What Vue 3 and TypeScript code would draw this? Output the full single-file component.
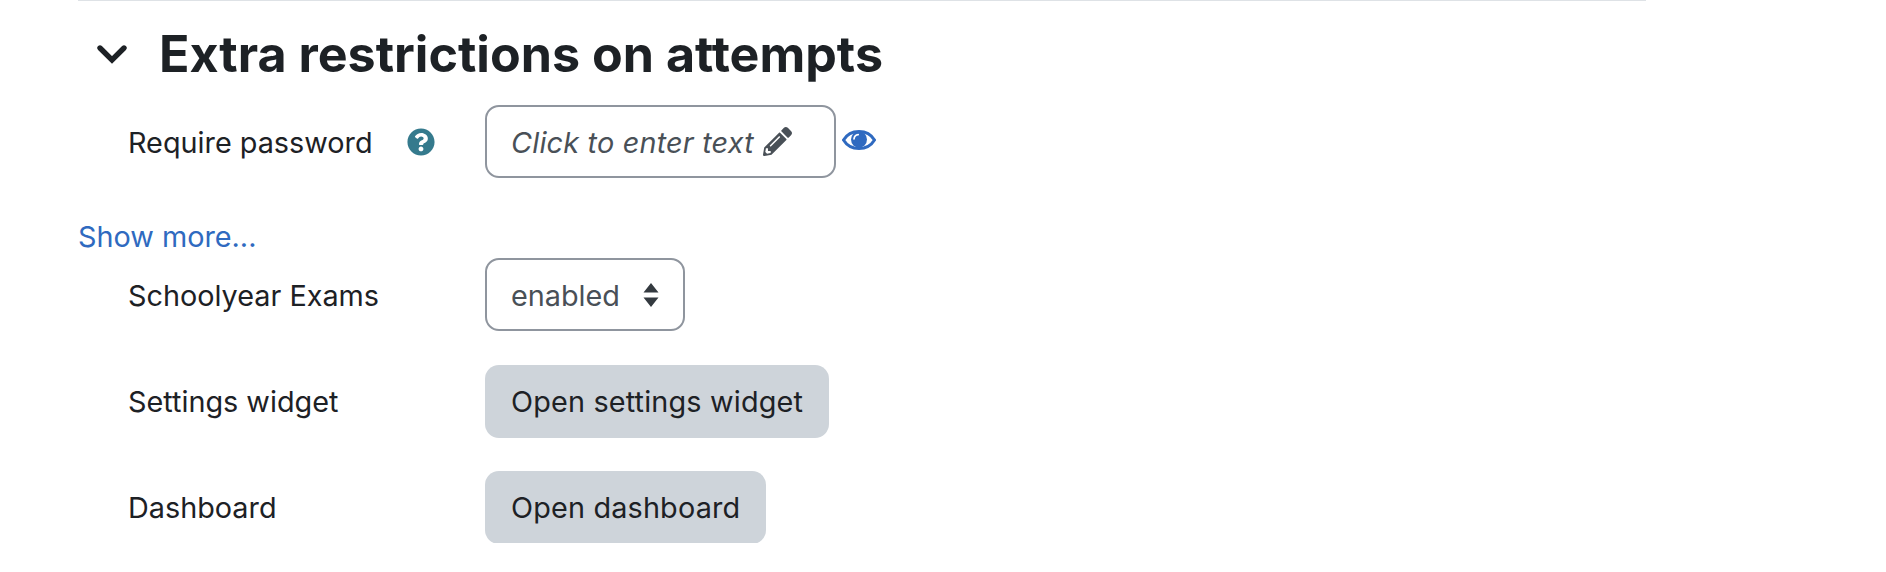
<template>
  <div class="page">
    <div class="section">
      <div class="section-head">
        <svg class="chevron" viewBox="0 0 32 22" aria-hidden="true">
          <path d="M4 5l12 12L28 5" fill="none" stroke="currentColor" stroke-width="5.4" stroke-linecap="round" stroke-linejoin="miter" />
        </svg>
        <h3 class="section-title">Extra restrictions on attempts</h3>
      </div>

      <div class="row row-password">
        <div class="label">
          <span>Require password</span>
          <svg class="help" viewBox="0 0 512 512" aria-hidden="true">
            <path
              fill="currentColor"
              d="M504 256c0 137-111 248-248 248S8 393 8 256 119 8 256 8s248 111 248 248zM263 90c-54 0-89 23-116 63-4 5-3 12 3 16l35 26c5 4 13 3 17-2 18-23 30-36 57-36 20 0 45 13 45 33 0 15-12 22-32 33-23 13-54 30-54 71v4c0 7 5 12 12 12h56c7 0 12-5 12-12v-2c0-28 83-29 83-106 0-58-60-100-118-100zm-7 248c-24 0-44 20-44 44s20 44 44 44 44-20 44-44-20-44-44-44z"
            />
          </svg>
        </div>
        <div class="control">
          <div class="inplace">
            <em>Click to enter text</em>
            <svg class="pencil" viewBox="0 0 512 512" aria-hidden="true">
              <path
                fill="currentColor"
                d="M497.9 142.1l-46.1 46.1c-4.700 4.700-12.300 4.700-17 0l-111-111c-4.700-4.700-4.700-12.300 0-17l46.100-46.100c18.700-18.700 49.100-18.700 67.900 0l60.100 60.100c18.800 18.700 18.800 49.100 0 67.900zM284.200 99.800L21.600 362.400.4 483.900c-2.900 16.400 11.400 30.600 27.800 27.800l121.500-21.300 262.600-262.600c4.700-4.700 4.700-12.300 0-17l-111-111c-4.800-4.700-12.400-4.700-17.100 0zM124.100 339.900c-5.500-5.500-5.500-14.300 0-19.800l154-154c5.500-5.500 14.300-5.500 19.800 0s5.500 14.300 0 19.800l-154 154c-5.500 5.500-14.300 5.500-19.800 0zM88 424h48v36.300l-64.500 11.300-31.100-31.100L51.700 376H88v48z"
              />
            </svg>
          </div>
          <svg class="eye" viewBox="0 0 34 20" aria-hidden="true">
            <path
              d="M1.500 10C5 4.200 10.500 1.500 17 1.500S29 4.200 32.500 10C29 15.800 23.500 18.500 17 18.500S5 15.800 1.500 10z"
              fill="none"
              stroke="currentColor"
              stroke-width="3"
            />
            <circle cx="17" cy="9.500" r="8" fill="currentColor" />
            <path d="M12 8.800C12.300 6.400 14 4.800 16.200 4.600" fill="none" stroke="#fff" stroke-width="1.700" stroke-linecap="round" />
          </svg>
        </div>
      </div>

      <a class="show-more" href="#">Show more...</a>

      <div class="row row-select">
        <div class="label"><span>Schoolyear Exams</span></div>
        <div class="control">
          <div class="select">
            <span>enabled</span>
            <svg class="updown" viewBox="0 0 16 26" aria-hidden="true">
              <path fill="currentColor" d="M8 1l7.500 9.500H.5zM8 25L.5 15.500h15z" />
            </svg>
          </div>
        </div>
      </div>

      <div v-for="item in buttons" :key="item.label" class="row row-button">
        <div class="label"><span>{{ item.label }}</span></div>
        <div class="control">
          <button class="btn" type="button">{{ item.action }}</button>
        </div>
      </div>
    </div>
  </div>
</template>

<script setup lang="ts">
const buttons: { label: string; action: string }[] = [
  { label: 'Settings widget', action: 'Open settings widget' },
  { label: 'Dashboard', action: 'Open dashboard' }
]
</script>

<style>
html,
body {
  background: #fff;
  overflow: hidden;
}
</style>

<style scoped>
.page {
  width: 1568px;
  margin-left: 78px;
  font-family: Inter, "Liberation Sans", sans-serif;
  font-size: 28.8px;
  line-height: 42px;
  color: #1d2125;
}

.section {
  border-top: 1px solid #dee2e6;
}

.section-head {
  display: flex;
  align-items: center;
  height: 104px;
  padding: 2px 0 0 18px;
  box-sizing: border-box;
}

.chevron {
  width: 32px;
  height: 22px;
  margin-right: 31px;
}

.section-title {
  margin: 0;
  font-size: 50.2px;
  line-height: 58px;
  font-weight: 700;
}

.row {
  display: flex;
  padding-left: 50px;
}

.label {
  display: flex;
  align-items: center;
  justify-content: space-between;
  width: 357px;
  height: 73px;
  padding-right: 50px;
  box-sizing: border-box;
}

.label span,
.inplace em,
.select span,
.btn {
  position: relative;
  top: 1px;
}

.control {
  display: flex;
  align-items: center;
}

.help {
  width: 28px;
  height: 28px;
  color: #357a8d;
}

.inplace,
.select {
  display: flex;
  align-items: center;
  height: 73px;
  box-sizing: border-box;
  padding: 0 24px;
  border: 2px solid #8f959e;
  border-radius: 14px;
  color: #495057;
}

.inplace {
  width: 351px;
}

.inplace em {
  letter-spacing: 0.2px;
}

.pencil {
  width: 29px;
  height: 29px;
  margin-left: 9px;
}

.eye {
  width: 34px;
  height: 20px;
  margin: -4px 0 0 6px;
  color: #2f6ac0;
}

.show-more {
  display: block;
  margin-top: 38px;
  color: #2f6ac0;
  text-decoration: none;
}

.select {
  width: 200px;
  justify-content: space-between;
}

.updown {
  width: 16px;
  height: 26px;
  color: #343a40;
}

.row-button {
  margin-top: 33px;
}

.btn {
  height: 73px;
  padding: 0 26px;
  border: 0;
  border-radius: 14px;
  background: #ced4da;
  color: #1d2125;
  font: inherit;
  letter-spacing: 0.17px;
}
</style>
